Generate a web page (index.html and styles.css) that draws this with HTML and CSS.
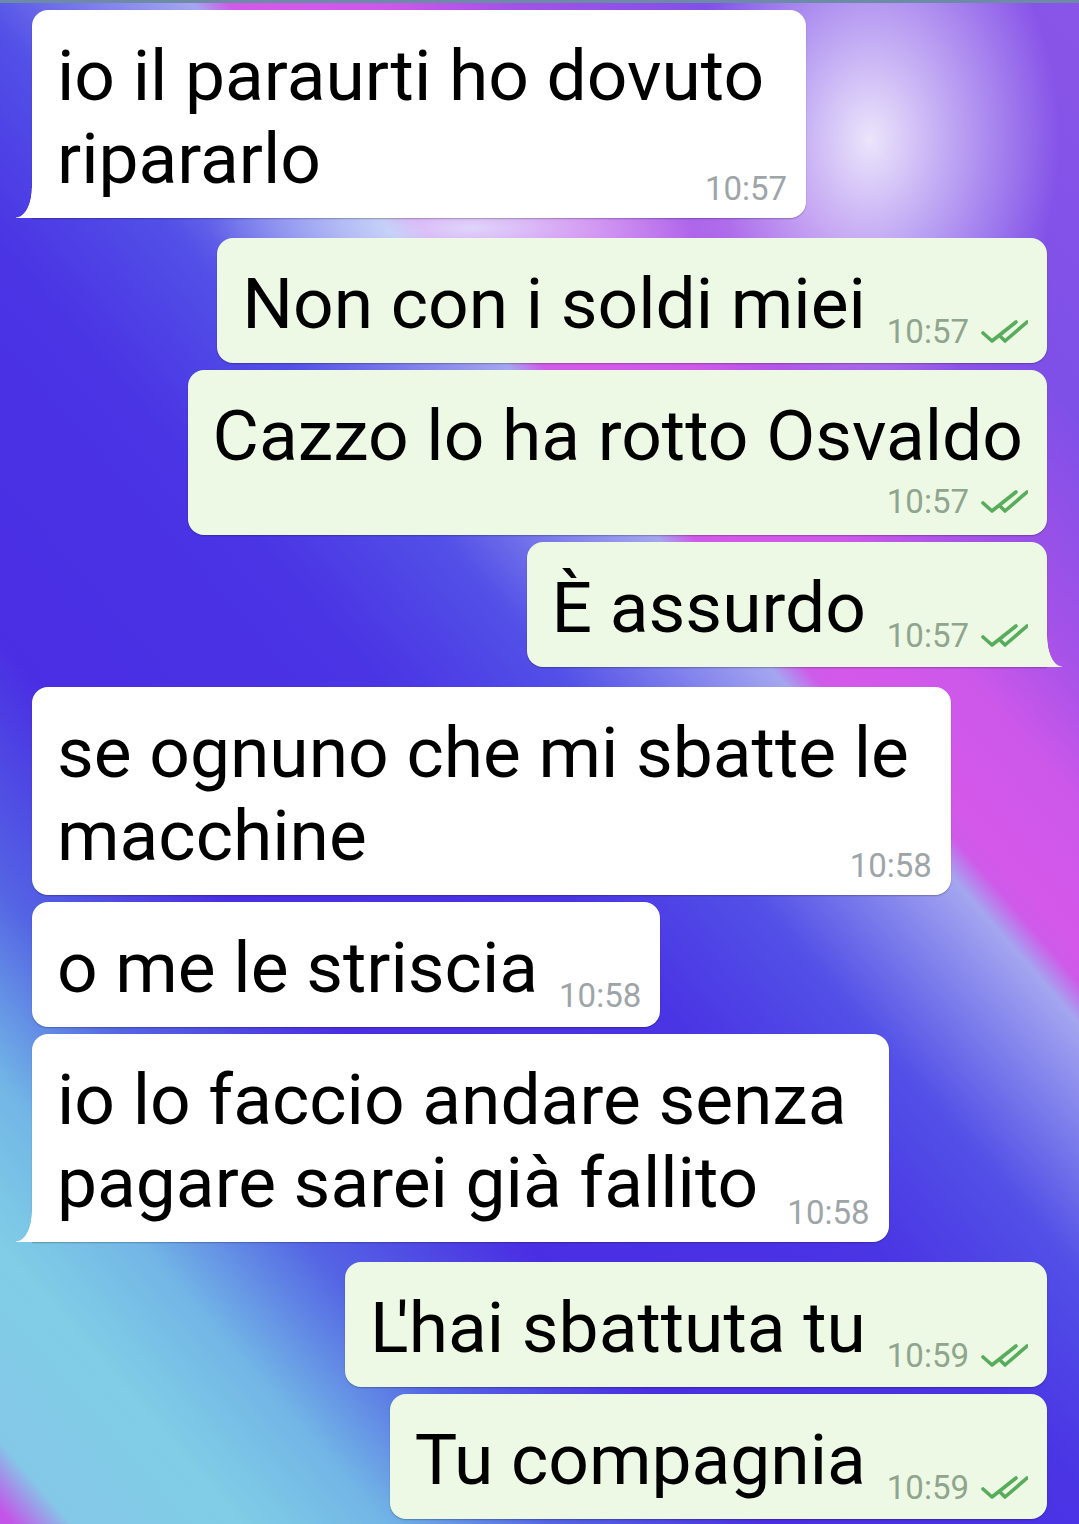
FILE: index.html
```html
<!DOCTYPE html>
<html lang="it">
<head>
    <meta charset="UTF-8">
    <title>Chat</title>
    <link rel="stylesheet" href="styles.css">
</head>
<body>
    <div class="chat">
        <div class="msg in tail multi">
            <p class="text">io il paraurti ho dovuto<br>ripararlo</p>
            <span class="meta">10:57</span>
        </div>

        <div class="msg out first">
            <p class="text">Non con i soldi miei</p>
            <span class="meta">10:57 <svg class="ticks" viewBox="0 0 47 24"><path d="M2 14 L11 22 L35 3"/><path d="M19 17 L24 22 L46 3"/></svg></span>
        </div>
        <div class="msg out stack">
            <p class="text">Cazzo lo ha rotto Osvaldo</p>
            <span class="meta">10:57 <svg class="ticks" viewBox="0 0 47 24"><path d="M2 14 L11 22 L35 3"/><path d="M19 17 L24 22 L46 3"/></svg></span>
        </div>
        <div class="msg out tail">
            <p class="text">È assurdo</p>
            <span class="meta">10:57 <svg class="ticks" viewBox="0 0 47 24"><path d="M2 14 L11 22 L35 3"/><path d="M19 17 L24 22 L46 3"/></svg></span>
        </div>

        <div class="msg in first multi">
            <p class="text">se ognuno che mi sbatte le<br>macchine</p>
            <span class="meta">10:58</span>
        </div>
        <div class="msg in">
            <p class="text">o me le striscia</p>
            <span class="meta">10:58</span>
        </div>
        <div class="msg in tail multi">
            <p class="text">io lo faccio andare senza<br>pagare sarei già fallito</p>
            <span class="meta">10:58</span>
        </div>

        <div class="msg out first">
            <p class="text"><span class="kern">L</span>'hai sbattuta tu</p>
            <span class="meta">10:59 <svg class="ticks" viewBox="0 0 47 24"><path d="M2 14 L11 22 L35 3"/><path d="M19 17 L24 22 L46 3"/></svg></span>
        </div>
        <div class="msg out">
            <p class="text">Tu compagnia</p>
            <span class="meta">10:59 <svg class="ticks" viewBox="0 0 47 24"><path d="M2 14 L11 22 L35 3"/><path d="M19 17 L24 22 L46 3"/></svg></span>
        </div>
    </div>
</body>
</html>
```

FILE: styles.css
```css
html, body {
    margin: 0;
    height: 100%;
    overflow: hidden;
}
body {
    font-family: Roboto, "Noto Sans", sans-serif;
    color: #000;
    background:
        radial-gradient(190px 260px at 870px 140px, rgba(255,255,255,0.85), rgba(255,255,255,0) 100%),
        radial-gradient(260px 60px at 470px 228px, rgba(225,245,255,0.8), rgba(225,245,255,0) 100%),
        linear-gradient(229deg,
            #8a55e8 0%,
            #7e50e8 15%,
            #a552e8 24%,
            #cc58ea 29%,
            #d458ea 34%,
            #cf5ae9 35.5%,
            #a4a6f0 37%,
            #7f80ec 41%,
            #5250e7 46%,
            #4a34e4 54%,
            #4a2ee3 68%,
            #5464e4 77%,
            #72b6e6 84%,
            #80cde6 90%,
            #84c8e8 97%,
            #c454e8 99.5%);
    border-top: 3px solid #6d8aa6;
    box-sizing: border-box;
}
.chat {
    display: flex;
    flex-direction: column;
    padding: 7px 32px 0;
}

.msg {
    position: relative;
    display: flex;
    align-items: flex-end;
    column-gap: 21px;
    max-width: 940px;
    margin-top: 7px;
    padding: 24px 19px 18px 25px;
    border-radius: 16px;
    box-shadow: 0 1px 1.5px rgba(0, 0, 0, 0.25);
}
.msg.first {
    margin-top: 20px;
}
.chat .msg:first-child {
    margin-top: 0;
}
.msg.in {
    align-self: flex-start;
    background: #fff;
}
.msg.out {
    align-self: flex-end;
    background: #edf9e5;
}

.text {
    margin: 0;
    font-size: 71.3px;
    line-height: 83px;
    white-space: nowrap;
}
.kern {
    letter-spacing: -12px;
}
.meta {
    display: flex;
    align-items: baseline;
    margin-bottom: -3px;
    font-size: 33px;
    line-height: 33px;
    white-space: nowrap;
    color: #9ea5a8;
}
.out .meta {
    color: #8fa58e;
}
.ticks {
    width: 47px;
    height: 24px;
    margin-left: 12px;
    fill: none;
    stroke: #58ad5c;
    stroke-width: 3.6;
    stroke-linecap: round;
    stroke-linejoin: round;
}

/* text on two lines, time tucked under the right side */
.msg.multi {
    flex-direction: column;
    align-items: flex-start;
}
.msg.multi .text {
    padding-right: 23px;
}
.msg.multi .meta {
    align-self: flex-end;
    margin-top: -28px;
    margin-bottom: -5px;
}

/* time does not fit next to the text: own row */
.msg.stack {
    flex-direction: column;
    align-items: flex-start;
    padding-bottom: 17px;
}
.msg.stack .text {
    padding-right: 5px;
}
.msg.stack .meta {
    align-self: flex-end;
    margin-top: 8px;
    margin-bottom: 0;
}

/* bubble tails */
.msg.in.tail {
    border-bottom-left-radius: 0;
}
.msg.out.tail {
    border-bottom-right-radius: 0;
}
.msg.tail::before {
    content: "";
    position: absolute;
    bottom: 0;
    width: 16px;
    height: 30px;
}
.msg.in.tail::before {
    left: -16px;
    background: radial-gradient(16px 30px at 0 0, rgba(255,255,255,0) 96%, #fff 100%);
}
.msg.out.tail::before {
    right: -15px;
    width: 15px;
    background: radial-gradient(15px 30px at 100% 0, rgba(237,249,229,0) 96%, #edf9e5 100%);
}
```
